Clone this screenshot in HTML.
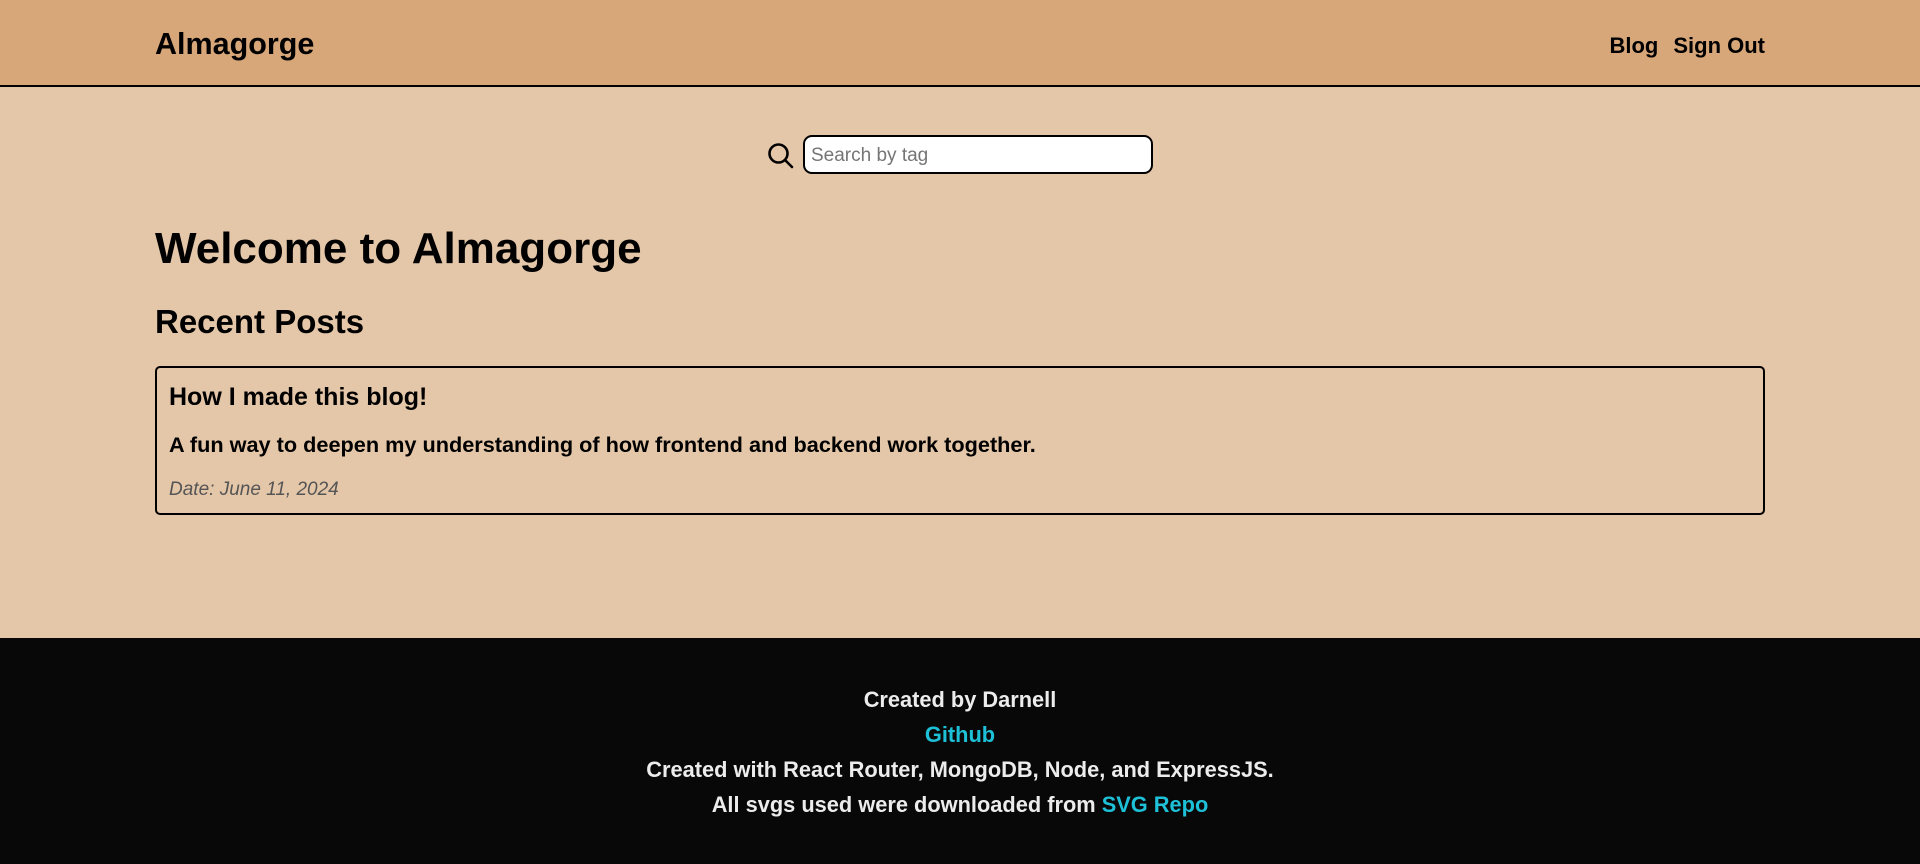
<!DOCTYPE html>
<html><head><meta charset="utf-8"><style>
*{margin:0;padding:0;box-sizing:border-box}
body{width:1920px;height:864px;overflow:hidden;background:#e4c6a8;font-family:"Liberation Sans",sans-serif;color:#000;position:relative}
.hdr{position:absolute;left:0;top:0;width:1920px;height:87px;background:#d7a679;border-bottom:2px solid #000}
.logo{position:absolute;left:155px;top:26px;font-size:30.5px;font-weight:bold;line-height:36px}
.nav{position:absolute;right:155px;top:33px;font-size:22px;font-weight:bold;line-height:26px;word-spacing:0}
.nav span{margin-left:15px}
.icon{position:absolute;left:767px;top:142px}
.inp{position:absolute;left:803px;top:135px;width:350px;height:39px;border:2px solid #000;border-radius:9px;background:#fff;font-size:19px;color:#757575;padding:8px 6px;line-height:21px}
h1{position:absolute;left:155px;top:223px;font-size:44px;line-height:52px}
h2{position:absolute;left:155px;top:302px;font-size:33px;line-height:40px}
.card{position:absolute;left:155px;top:366px;width:1610px;height:149px;border:2px solid #000;border-radius:5px}
.t{position:absolute;left:12px;top:14px;font-size:25px;font-weight:bold;line-height:30px}
.d{position:absolute;left:12px;top:65px;font-size:21.7px;font-weight:bold;line-height:24px;white-space:nowrap}
.dt{position:absolute;left:12px;top:111px;font-size:19px;font-style:italic;color:#555;line-height:22px}
.ft{position:absolute;left:0;top:638px;width:1920px;height:226px;background:#080808;color:#ececec;text-align:center;font-weight:bold;font-size:21.8px;line-height:35px;padding-top:44px}
.ft a{color:#1ec0d8;text-decoration:none}
</style></head><body>
<div class="hdr"><div class="logo">Almagorge</div><div class="nav">Blog<span>Sign Out</span></div></div>
<svg class="icon" width="27" height="27" viewBox="0 0 27 27"><circle cx="11.5" cy="11.5" r="9" fill="none" stroke="#000" stroke-width="2.6"/><line x1="18" y1="18" x2="25" y2="25" stroke="#000" stroke-width="2.6" stroke-linecap="round"/></svg>
<div class="inp">Search by tag</div>
<h1>Welcome to Almagorge</h1>
<h2>Recent Posts</h2>
<div class="card"><div class="t">How I made this blog!</div><div class="d">A fun way to deepen my understanding of how frontend and backend work together.</div><div class="dt">Date: June 11, 2024</div></div>
<div class="ft">Created by Darnell<br><a>Github</a><br>Created with React Router, MongoDB, Node, and ExpressJS.<br>All svgs used were downloaded from <a>SVG Repo</a></div>
</body></html>
